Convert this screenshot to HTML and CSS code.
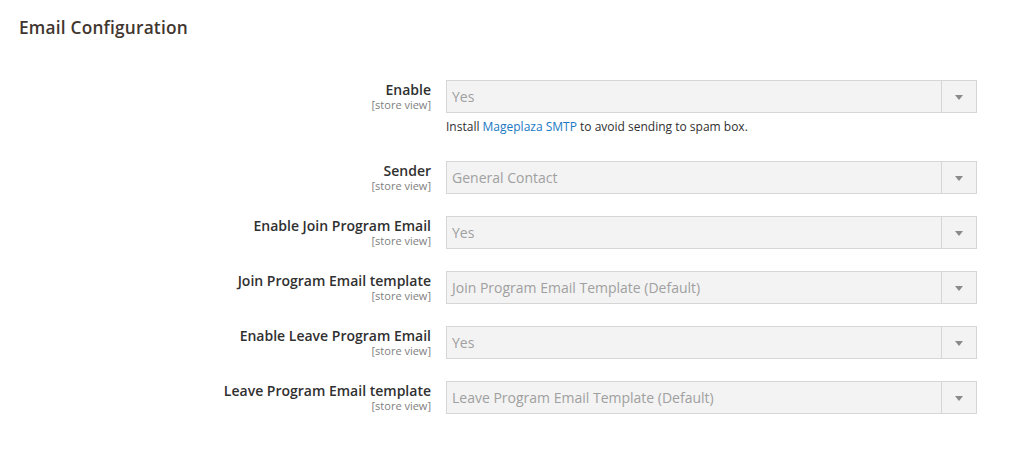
FILE: index.html
```html
<!DOCTYPE html>
<html>
<head>
<meta charset="utf-8">
<link rel="stylesheet" href="styles.css">
</head>
<body>
<div class="section">
  <h2 class="section-title">Email Configuration</h2>
  <div class="fields">
    <div class="row">
      <div class="label"><span class="name">Enable</span><span class="scope">[store view]</span></div>
      <div class="control">
        <div class="select"><span class="value">Yes</span><span class="arrow"></span></div>
        <p class="note">Install <a href="#">Mageplaza SMTP</a> to avoid sending to spam box.</p>
      </div>
    </div>
    <div class="row">
      <div class="label"><span class="name">Sender</span><span class="scope">[store view]</span></div>
      <div class="control">
        <div class="select"><span class="value">General Contact</span><span class="arrow"></span></div>
      </div>
    </div>
    <div class="row">
      <div class="label"><span class="name">Enable Join Program Email</span><span class="scope">[store view]</span></div>
      <div class="control">
        <div class="select"><span class="value">Yes</span><span class="arrow"></span></div>
      </div>
    </div>
    <div class="row">
      <div class="label"><span class="name">Join Program Email template</span><span class="scope">[store view]</span></div>
      <div class="control">
        <div class="select"><span class="value">Join Program Email Template (Default)</span><span class="arrow"></span></div>
      </div>
    </div>
    <div class="row">
      <div class="label"><span class="name">Enable Leave Program Email</span><span class="scope">[store view]</span></div>
      <div class="control">
        <div class="select"><span class="value">Yes</span><span class="arrow"></span></div>
      </div>
    </div>
    <div class="row">
      <div class="label"><span class="name">Leave Program Email template</span><span class="scope">[store view]</span></div>
      <div class="control">
        <div class="select"><span class="value">Leave Program Email Template (Default)</span><span class="arrow"></span></div>
      </div>
    </div>
  </div>
</div>
</body>
</html>
```
FILE: styles.css
```css
html, body {
  margin: 0;
  padding: 0;
  background: #ffffff;
  font-family: "Open Sans", "Liberation Sans", sans-serif;
  color: #303030;
}
.section {
  padding: 16px 0 0 19px;
}
.section-title {
  margin: 0;
  font-size: 17.3px;
  font-weight: 600;
  line-height: 24px;
  color: #41362f;
  letter-spacing: 0.2px;
}
.fields {
  margin-top: 40px;
  display: flex;
  flex-direction: column;
  gap: 22px;
}
.row {
  display: flex;
  gap: 15px;
}
.label {
  width: 412px;
  display: flex;
  flex-direction: column;
  align-items: flex-end;
  padding-top: 2px;
}
.name {
  font-size: 14px;
  font-weight: 600;
  line-height: 16px;
  color: #303030;
}
.scope {
  font-size: 11px;
  line-height: 13px;
  color: #808080;
}
.control {
  width: 531px;
}
.select {
  height: 31px;
  border: 1px solid #d6d6d6;
  background: #f3f3f3;
  display: flex;
  align-items: center;
  position: relative;
  box-sizing: content-box;
}
.value {
  flex: 1;
  padding-left: 5px;
  font-size: 14px;
  color: #a0a0a0;
}
.arrow {
  width: 34px;
  height: 31px;
  border-left: 1px solid #d6d6d6;
  position: relative;
}
.arrow::after {
  content: "";
  position: absolute;
  left: 13px;
  top: 14px;
  border-left: 4px solid transparent;
  border-right: 4px solid transparent;
  border-top: 5px solid #8a8a8a;
}
.note {
  margin: 6px 0 4px 0;
  font-size: 12px;
  line-height: 16px;
  color: #303030;
}
.note a {
  color: #1979c3;
  text-decoration: none;
}
```
